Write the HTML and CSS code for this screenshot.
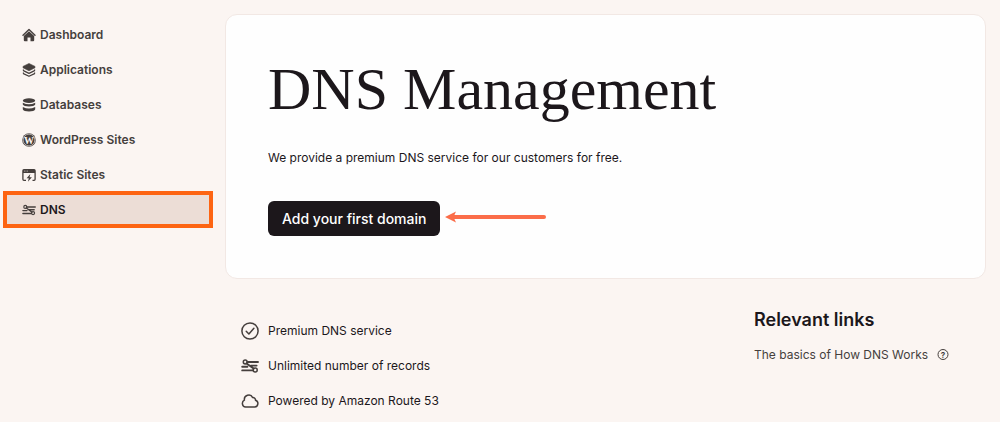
FILE: index.html
```
<!DOCTYPE html>
<html lang="en">
	<head>
		<meta charset="utf-8">
		<meta name="viewport" content="width=device-width, initial-scale=1">
		<link rel="stylesheet" href="styles.css">
		<title>DNS Management</title>
	</head>
	<body>
		<svg class="defs" width="0" height="0" aria-hidden="true">
			<symbol id="icon-dns" viewBox="0 0 18 14">
				<g fill="none" stroke="currentColor" stroke-width="1.9" stroke-linecap="round" stroke-linejoin="round">
					<path d="M6.4 3H17M5.6 4.4L12.6 9.6M10 6.6H15.6M1.2 7.8H6.4M1.2 11.4H11.8" />
					<circle cx="4.2" cy="3" r="1.9" stroke-width="1.5" />
					<circle cx="14.2" cy="11" r="2" stroke-width="1.5" />
				</g>
			</symbol>
		</svg>
		<div class="layout">
			<nav class="sidebar">
				<a href="#dashboard" class="nav-item">
					<svg class="nav-icon" viewBox="0 0 14 14">
						<path d="M1 7.2L7 1.6L13 7.2" fill="none" stroke="currentColor" stroke-width="1.4" stroke-linecap="round" stroke-linejoin="round" />
						<path d="M7 3.2L12.2 8V12.2Q12.2 13.2 11.2 13.2H8.5V9.4H5.5V13.2H2.8Q1.8 13.2 1.8 12.2V8Z" fill="currentColor" />
					</svg>
					Dashboard
				</a>
				<a href="#applications" class="nav-item">
					<svg class="nav-icon" viewBox="0 0 14 14">
						<path d="M7 .5L13 3.4V4.8L7 7.8L1 4.8V3.4Z" fill="currentColor" stroke="currentColor" stroke-width=".6" stroke-linejoin="round" />
						<path d="M1.4 6.4V7.6L7 10.4L12.6 7.6V6.4M1.4 9.4V10.6L7 13.3L12.6 10.6V9.4" fill="none" stroke="currentColor" stroke-width="1.2" stroke-linejoin="round" />
					</svg>
					Applications
				</a>
				<a href="#databases" class="nav-item">
					<svg class="nav-icon" viewBox="0 0 14 14" fill="currentColor">
						<ellipse cx="7" cy="2.6" rx="6.2" ry="2.3" />
						<path d="M.8 4.7Q7 7.7 13.2 4.7V6.6C12.7 9.1 1.3 9.1 .8 6.6Z" />
						<path d="M.8 8.9Q7 11.9 13.2 8.9V11.2C12.7 14.1 1.3 14.1 .8 11.2Z" />
					</svg>
					Databases
				</a>
				<a href="#wordpress" class="nav-item">
					<svg class="nav-icon" viewBox="0 0 14 14">
						<circle cx="7" cy="7" r="6.8" fill="currentColor" />
						<circle cx="7" cy="7" r="5.9" fill="none" stroke="#fbf5f2" stroke-width=".6" />
						<text class="wp-letter" x="7" y="10.7" text-anchor="middle">W</text>
					</svg>
					WordPress Sites
				</a>
				<a href="#static" class="nav-item">
					<svg class="nav-icon" viewBox="0 0 14 14">
						<path d="M4 12.3H1.9Q.9 12.3 .9 11.3V2.7Q.9 1.7 1.9 1.7H12.1Q13.1 1.7 13.1 2.7V11.3Q13.1 12.3 12.1 12.3H10.5M1 4.4H13" fill="none" stroke="currentColor" stroke-width="1.3" />
						<path d="M1 2H13V4.6H1Z" fill="currentColor" />
						<path d="M2.2 3.1H5.8" stroke="#fbf5f2" stroke-width=".7" stroke-dasharray=".8 .6" />
						<path d="M8.3 6L4.6 10.2H6.8L5.9 13.8L9.9 9.2H7.6Z" fill="currentColor" />
					</svg>
					Static Sites
				</a>
				<a href="#dns" class="nav-item nav-active" aria-current="page">
					<svg class="nav-icon"><use href="#icon-dns" /></svg>
					DNS
				</a>
			</nav>
			<main class="main">
				<section class="card">
					<h1>DNS Management</h1>
					<p class="intro">We provide a premium DNS service for our customers for free.</p>
					<div class="actions">
						<button type="button" class="button">Add your first domain</button>
						<svg class="arrow" viewBox="0 0 102 18" aria-hidden="true">
							<path d="M9 7H99" stroke="#fb6d49" stroke-width="4" stroke-linecap="round" />
							<path d="M0 7L11 1.5L8.5 7L11 12.5Z" fill="#fb6d49" />
						</svg>
					</div>
				</section>
				<div class="details">
					<ul class="features">
						<li>
							<svg class="feature-icon" viewBox="0 0 18 18" fill="none" stroke="currentColor" stroke-width="1.5" stroke-linecap="round" stroke-linejoin="round">
								<circle cx="9" cy="9" r="8.1" />
								<path d="M5.2 9.3L7.9 12L12.9 6.2" />
							</svg>
							Premium DNS service
						</li>
						<li>
							<svg class="feature-icon"><use href="#icon-dns" /></svg>
							Unlimited number of records
						</li>
						<li>
							<svg class="feature-icon" viewBox="0 0 18 18" fill="none" stroke="currentColor" stroke-width="1.5" stroke-linejoin="round">
								<path d="M4.6 15H13.7A3.5 3.5 0 0 0 14.5 8.2A2.5 2.5 0 0 0 11.7 5.6A4.4 4.4 0 0 0 3.4 8.2A3.6 3.6 0 0 0 4.6 15Z" />
							</svg>
							Powered by Amazon Route 53
						</li>
					</ul>
					<aside class="links">
						<h2>Relevant links</h2>
						<a href="#how-dns-works" class="doc-link">
							The basics of How DNS Works
							<svg class="help-icon" viewBox="0 0 12 12">
								<circle cx="6" cy="5.5" r="5" fill="none" stroke="currentColor" />
								<text class="help-mark" x="6" y="8.5" text-anchor="middle">?</text>
							</svg>
						</a>
					</aside>
				</div>
			</main>
		</div>
	</body>
</html>
```
FILE: styles.css
```
* {
	box-sizing: border-box;
}
body {
	margin: 0;
	background-color: #fbf5f2;
	color: #1c171b;
	font-family: Inter, "Liberation Sans", sans-serif;
	font-size: 12px;
	line-height: 20px;
}
h1, h2, p, ul {
	margin: 0;
	padding: 0;
}
.defs {
	position: absolute;
}
.layout {
	display: flex;
}
.sidebar {
	flex: 0 0 225px;
	padding: 17px 13px 0 4px;
}
.nav-item {
	display: flex;
	align-items: center;
	gap: 4px;
	height: 35px;
	padding-left: 18px;
	color: #453f3d;
	font-weight: 600;
	text-decoration: none;
}
.nav-active {
	background-color: #ecddd6;
	color: #1c171b;
	outline: 4px solid #fd6412;
	outline-offset: -3px;
}
.nav-icon {
	width: 14px;
	height: 14px;
	color: #453f3d;
}
.wp-letter {
	fill: #fbf5f2;
	font: bold 10px "Liberation Serif", serif;
}
.main {
	flex: 1;
	min-width: 0;
	padding: 14px 14px 0 0;
}
.card {
	padding: 40px 42px 42px;
	background-color: #fefefe;
	border: 1px solid #f2e8e4;
	border-radius: 12px;
}
h1 {
	font-family: "Liberation Serif", serif;
	font-size: 60px;
	font-weight: normal;
	line-height: 68px;
}
.intro {
	margin-top: 25px;
}
.actions {
	display: flex;
	align-items: center;
	gap: 5px;
	margin-top: 33px;
}
.button {
	height: 35px;
	padding: 0 14px;
	border: none;
	border-radius: 6px;
	background-color: #1c171b;
	color: white;
	font: 500 14px Inter, "Liberation Sans", sans-serif;
}
.arrow {
	width: 102px;
	height: 18px;
}
.details {
	display: flex;
	justify-content: space-between;
	padding-left: 16px;
}
.features {
	padding-top: 42px;
	list-style: none;
}
.features li {
	display: flex;
	align-items: center;
	gap: 9px;
	height: 20px;
	margin-bottom: 15px;
}
.feature-icon {
	width: 18px;
	height: 18px;
	color: #453f3d;
}
.links {
	width: 232px;
	padding-top: 29px;
}
h2 {
	font-size: 18px;
	font-weight: 600;
	line-height: 24px;
}
.doc-link {
	display: flex;
	align-items: center;
	gap: 9px;
	margin-top: 13px;
	color: #453f3d;
	text-decoration: none;
}
.help-icon {
	width: 12px;
	height: 12px;
}
.help-mark {
	fill: currentColor;
	font: bold 8px Inter, sans-serif;
}
```
